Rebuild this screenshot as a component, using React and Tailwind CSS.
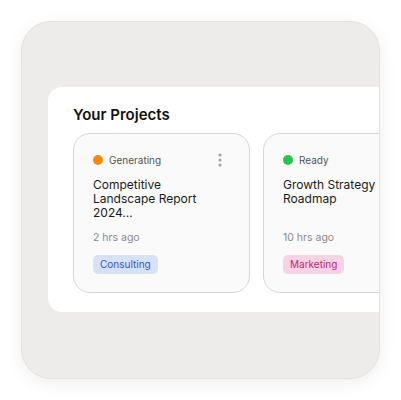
import React from "react";

const projects = [
  {
    status: "Generating",
    dot: "bg-[#f28a12]",
    title: "Competitive Landscape Report 2024...",
    time: "2 hrs ago",
    tag: "Consulting",
    tagClass: "bg-[#d7e1f8] text-[#3457d5]",
  },
  {
    status: "Ready",
    dot: "bg-[#2bc24a]",
    title: "Growth Strategy Roadmap",
    time: "10 hrs ago",
    tag: "Marketing",
    tagClass: "bg-[#f8d3e5] text-[#c8246f]",
  },
];

const Kebab = () => (
  <svg width="10" height="16" viewBox="0 0 10 16" className="mr-[5px]">
    <circle cx="5" cy="3" r="1.6" fill="#a3a3a3" />
    <circle cx="5" cy="8" r="1.6" fill="#a3a3a3" />
    <circle cx="5" cy="13" r="1.6" fill="#a3a3a3" />
  </svg>
);

const ProjectCard = ({ p, menu }) => (
  <div className="w-[177px] h-[160px] shrink-0 rounded-[17px] border border-[#d6d6d6] bg-[#fafafa] px-[19px] pt-[18px] pb-[18px] flex flex-col">
    <div className="flex items-center justify-between h-[16px]">
      <div className="flex items-center">
        <span className={`w-[10px] h-[10px] rounded-full ${p.dot}`} />
        <span className="ml-[6px] text-[10px] text-[#555]">{p.status}</span>
      </div>
      {menu && <Kebab />}
    </div>
    <div className="mt-[10px] max-w-[120px] text-[12px] leading-[14px] text-[#1a1a1a]">{p.title}</div>
    <div className="mt-auto text-[10.5px] leading-[14px] text-[#8a8a8a]">{p.time}</div>
    <span
      className={`mt-[10px] self-start h-[19px] px-[7px] rounded-[5px] text-[10px] leading-[19px] ${p.tagClass}`}
    >
      {p.tag}
    </span>
  </div>
);

export default function App() {
  return (
    <div
      className="w-[401px] h-[400px] bg-white pt-[21px] pl-[21px]"
      style={{ fontFamily: "Inter, 'Noto Sans', sans-serif" }}
    >
      <div className="w-[359px] h-[358px] rounded-[30px] bg-[#edecea] border border-[#e3e2e0] shadow-[0_4px_18px_rgba(0,0,0,0.07)] overflow-hidden pt-[65px] pl-[26px]">
        <div className="w-[400px] h-[225px] bg-white rounded-l-[14px] pl-[25px] pt-[16px]">
          <h2 className="text-[15px] leading-[24px] font-semibold text-[#111]">Your Projects</h2>
          <div className="mt-[6px] flex gap-[13px]">
            {projects.map((p, i) => (
              <ProjectCard key={p.title} p={p} menu={i === 0} />
            ))}
          </div>
        </div>
      </div>
    </div>
  );
}
